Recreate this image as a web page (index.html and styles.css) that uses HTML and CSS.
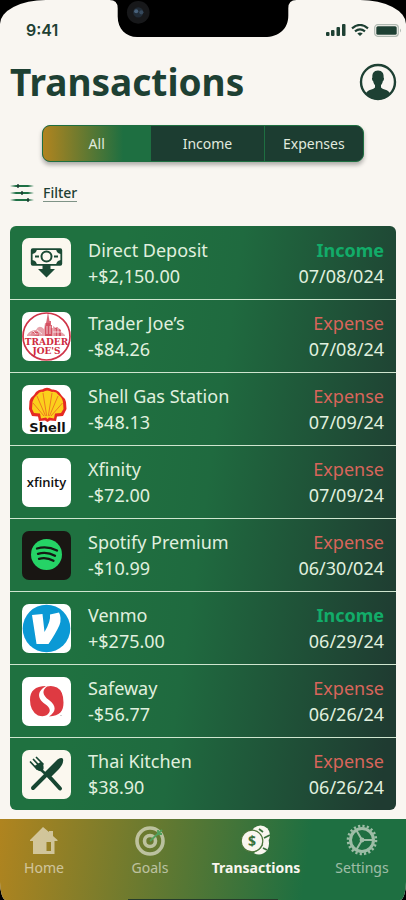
FILE: index.html
```html
<!DOCTYPE html>
<html lang="en">
<head>
    <meta charset="UTF-8">
    <meta name="viewport" content="width=device-width, initial-scale=1.0">
    <title>Transactions</title>
    <link rel="stylesheet" href="styles.css">
</head>
<body>
    <div class="screen">
        <svg class="notch" viewBox="0 0 182 36" aria-hidden="true">
            <path d="M0 0H182Q174 0 174 8V15C174 28 165 36 151 36H27C16 36 8 28 8 16V8Q8 0 0 0Z" fill="#000"/>
            <circle cx="28" cy="12" r="11" fill="#17181a"/>
            <circle cx="28" cy="12" r="5" fill="#202b36"/>
            <circle cx="26" cy="11" r="2" fill="#48617a"/>
            <circle cx="31" cy="12" r="2" fill="#36495c"/>
        </svg>

        <div class="status">
            <span class="time">9:41</span>
            <div class="signals">
                <svg width="20" height="12" viewBox="0 0 20 12" aria-hidden="true">
                    <rect x="0" y="8" width="3.500" height="4" rx="1"/>
                    <rect x="5" y="6" width="3.500" height="6" rx="1"/>
                    <rect x="10.500" y="3" width="3.500" height="9" rx="1"/>
                    <rect x="16" y="0" width="3.500" height="12" rx="1"/>
                </svg>
                <svg width="18" height="12" viewBox="0 0 18 12" aria-hidden="true">
                    <path d="M1 4.3Q9-2.4 17 4.3M4 7.4Q9 3.3 14 7.4" fill="none" stroke="#1e4033" stroke-width="2.2"/>
                    <path d="M6.3 9.4Q9 7.4 11.700 9.4L9 12Z"/>
                </svg>
                <svg width="28" height="13" viewBox="0 0 28 13" aria-hidden="true">
                    <rect x=".7" y=".7" width="23.6" height="11.6" rx="3" fill="none" stroke="#b0b9b1" stroke-width="1.2"/>
                    <rect x="2.3" y="2.3" width="20.4" height="8.4" rx="1.5"/>
                    <path d="M26 4.5Q28 6.5 26 8.5Z" fill="#b0b9b1"/>
                </svg>
            </div>
        </div>

        <header class="header">
            <h1>Transactions</h1>
            <button class="profile" type="button" aria-label="Profile">
                <svg width="38" height="38" viewBox="0 0 38 38" aria-hidden="true">
                    <circle cx="19" cy="19" r="17" fill="none" stroke="#1e4033" stroke-width="2.4"/>
                    <path d="M19 7.5C14.8 7.5 13 10.5 13.4 14.5C12.6 14.8 13 17.6 14.2 18.3C14.6 20.5 15.4 21.600 16 22.2V24.6C15 26.4 8.5 26.5 6.5 31Q12 36.500 19 36.500T31.500 31C29.5 26.5 23 26.4 22 24.6V22.2C22.6 21.6 23.4 20.5 23.8 18.3C25 17.6 25.4 14.8 24.6 14.5C25 10.5 23.2 7.5 19 7.5Z"/>
                </svg>
            </button>
        </header>

        <div class="tabs">
            <button class="tab active" type="button">All</button>
            <button class="tab" type="button">Income</button>
            <button class="tab" type="button">Expenses</button>
        </div>

        <button class="filter" type="button">
            <svg width="24" height="20" viewBox="0 0 24 20" aria-hidden="true">
                <path d="M0 3L6 2H18L24 3L18 4H6ZM0 10L6 9H18L24 10L18 11H6ZM0 17L6 16H18L24 17L18 18H6Z" fill="#1e7045"/>
                <ellipse cx="8" cy="3" rx="1.2" ry="2"/>
                <ellipse cx="12" cy="10" rx="1.2" ry="2"/>
                <ellipse cx="18" cy="17" rx="1.2" ry="2"/>
            </svg>
            <span>Filter</span>
        </button>

        <ul class="list">
            <li>
                <span class="logo cream">
                    <svg viewBox="0 0 49 49" aria-hidden="true">
                        <rect x="9.7" y="11.2" width="29.6" height="15.6" rx="1" fill="none" stroke="#1a4a34" stroke-width="1.8"/>
                        <path d="M10 11H15Q14.500 15.500 10 16ZM39 11H34Q34.500 15.500 39 16ZM10 27V22Q14.500 22.500 15 27ZM39 27V22Q34.500 22.500 34 27Z" fill="#1a4a34"/>
                        <circle cx="24.5" cy="18.5" r="5" fill="none" stroke="#1a4a34" stroke-width="2"/>
                        <path d="M13 18.500H17M32 18.500H36" stroke="#1a4a34" stroke-width="1.8"/>
                        <path d="M20.500 26.800H28.500V31H33L24.500 39.500L16 31H20.500Z" fill="#1a4a34"/>
                    </svg>
                </span>
                <div class="info"><h2>Direct Deposit</h2><p>+$2,150.00</p></div>
                <div class="meta"><p class="income">Income</p><p>07/08/024</p></div>
            </li>
            <li>
                <span class="logo">
                    <svg viewBox="0 0 49 49" aria-hidden="true">
                        <circle cx="24.5" cy="24.5" r="23.5" fill="#fff" stroke="#cf3549" stroke-width="1.7"/>
                        <path d="M5 23Q8 18 14 18Q17 12 22 17L23 11H28V16H31V14Q38 18 43 23V24H5Z" fill="#e6a3ab"/>
                        <path d="M26 0L27.500 9H29V13H30V24H23V15L24.500 9ZM32 17L35 15L39 18V24H32ZM8 23Q11 18 16 20L17 24Z" fill="#cf3549" opacity=".75"/>
                        <path d="M8 22H16M15 18L20 22M31 20H41M33 17V24M36 16V24M11 19L14 22M25 14V22M28 14V22" stroke="#fff" stroke-width=".7"/>
                        <text x="24.5" y="33" class="joes">TRADER</text>
                        <text x="24.5" y="42" class="joes">JOE'S</text>
                    </svg>
                </span>
                <div class="info"><h2>Trader Joe’s</h2><p>-$84.26</p></div>
                <div class="meta"><p class="expense">Expense</p><p>07/08/24</p></div>
            </li>
            <li>
                <span class="logo">
                    <svg viewBox="0 0 49 49" aria-hidden="true">
                        <path d="M17 36L16 31.500L10 31L7 24L7.500 16Q9 12 12 10L14 7Q17 4 20 4.500Q25 1 30 4.500Q34 4 37 7L40 11Q43 13 44 17L44.500 24L41 31L35 31.500L34 36L28 35.500L25.500 37L23 35.500Z" fill="#e52a23"/>
                        <path d="M19 33.500L18 28.500L12 28L10 24L10.500 17Q12 12 15 10Q18 6 21 7Q25 4 30 7Q34 6 36.500 10Q40 12 41 17L41.500 24L39 28L33 28.500L32 33.500L27 32.500L25.500 34L24 32.500Z" fill="#fbd01c"/>
                        <path d="M24.700 31L21 8M26.300 31L30 8M23.500 31L15 11M27.500 31L36 11M22 31L11 18M29 31L40.500 18" stroke="#ef7b20" stroke-width="1"/>
                        <text x="25.5" y="47" class="shell">Shell</text>
                    </svg>
                </span>
                <div class="info"><h2>Shell Gas Station</h2><p>-$48.13</p></div>
                <div class="meta"><p class="expense">Expense</p><p>07/09/24</p></div>
            </li>
            <li>
                <span class="logo">
                    <svg viewBox="0 0 49 49" aria-hidden="true">
                        <text x="24.5" y="29" class="xfinity">xfinity</text>
                    </svg>
                </span>
                <div class="info"><h2>Xfinity</h2><p>-$72.00</p></div>
                <div class="meta"><p class="expense">Expense</p><p>07/09/24</p></div>
            </li>
            <li>
                <span class="logo dark">
                    <svg viewBox="0 0 49 49" aria-hidden="true">
                        <circle cx="24.5" cy="23.5" r="15.5" fill="#25d366"/>
                        <path d="M15 17.500Q25 14.500 35 19.500M16 22.800Q25 20.300 33 24.800M17 27.800Q24.500 25.800 31.500 29.800" fill="none" stroke="#151a14" stroke-linecap="round" stroke-width="2.3"/>
                    </svg>
                </span>
                <div class="info"><h2>Spotify Premium</h2><p>-$10.99</p></div>
                <div class="meta"><p class="expense">Expense</p><p>06/30/024</p></div>
            </li>
            <li>
                <span class="logo">
                    <svg viewBox="0 0 49 49" aria-hidden="true">
                        <circle cx="24.5" cy="24.5" r="23.8" fill="#0b99d5"/>
                        <path d="M10 11L20.500 10L22.500 28Q29 17 28 10.500L37 8.500Q40 14 37.500 21Q34 29 26.500 40H14.500Z" fill="#fff"/>
                    </svg>
                </span>
                <div class="info"><h2>Venmo</h2><p>+$275.00</p></div>
                <div class="meta"><p class="income">Income</p><p>06/29/24</p></div>
            </li>
            <li>
                <span class="logo">
                    <svg viewBox="0 0 49 49" aria-hidden="true">
                        <path d="M24 9C13 9 8 14 8 23Q8 34 16 38.500Q22 40 25 38C29 35 29 31 23 27C16 22 14 15 24 9Z" fill="#de3a42"/>
                        <path d="M25 9.500C20 13 20 18 27 23C35 29 34 35 27 39.500C38 39 41.500 34 41.500 25.500Q41.500 14 35 10.500Q30 8 25 9.500Z" fill="#de3a42"/>
                        <circle cx="39" cy="38.500" r=".5" fill="#888"/>
                    </svg>
                </span>
                <div class="info"><h2>Safeway</h2><p>-$56.77</p></div>
                <div class="meta"><p class="expense">Expense</p><p>06/26/24</p></div>
            </li>
            <li>
                <span class="logo cream">
                    <svg viewBox="0 0 49 49" aria-hidden="true">
                        <path d="M11 38L24 25M28.500 28L38 38.500" stroke="#174632" stroke-width="4" stroke-linecap="round"/>
                        <path d="M22 23L35.500 9.500Q40 7 41 9Q42 14 36 20L27 29Z" fill="#174632"/>
                        <path d="M16 17L29 29" stroke="#174632" stroke-width="2.6"/>
                        <path d="M8.500 12L15 19M11.500 9.500L18 16.500M14.500 7.500L21 14" stroke="#174632" stroke-width="1.7" stroke-linecap="round"/>
                        <path d="M12.500 16L18.500 12L21 14Q22.500 19 20.500 20.500Q18 22.500 14.500 19.500Z" fill="#174632"/>
                    </svg>
                </span>
                <div class="info"><h2>Thai Kitchen</h2><p>$38.90</p></div>
                <div class="meta"><p class="expense">Expense</p><p>06/26/24</p></div>
            </li>
        </ul>

        <nav class="nav">
            <a href="#">
                <svg viewBox="0 0 32 32" aria-hidden="true">
                    <path fill-rule="evenodd" d="M15 3L21 8V7H25V12L29.500 16V17H26.500V30H5V17H2V16ZM18.500 18V27H23V18Z"/>
                </svg>
                <span>Home</span>
            </a>
            <a href="#">
                <svg viewBox="0 0 32 32" aria-hidden="true">
                    <circle cx="16" cy="17" r="13" fill="none" stroke="#f9f6ef" stroke-width="3.6"/>
                    <circle cx="16" cy="17" r="5.5" fill="none" stroke="#f9f6ef" stroke-width="3.6"/>
                    <path d="M16 17L28 6M24 9V6M24 10H28" stroke="#43bd7c" stroke-width="1.8" fill="none"/>
                </svg>
                <span>Goals</span>
            </a>
            <a class="current" href="#">
                <svg viewBox="0 0 32 32" aria-hidden="true">
                    <circle cx="20.5" cy="11" r="9.500"/>
                    <path d="M28 14Q30.500 21 27 26.500Q21 33 13.500 29Q22 26 24 18Q25 16 23 14Z"/>
                    <path d="M19 5L23 8M24 14L30 11M23 24L27 26" fill="none" stroke="#38703a" stroke-width="1.8"/>
                    <circle cx="12" cy="17" r="10.8" stroke="#4b7438" stroke-width="1.2"/>
                    <text x="12" y="22" class="coin">$</text>
                </svg>
                <span>Transactions</span>
            </a>
            <a href="#">
                <svg viewBox="0 0 32 32" aria-hidden="true">
                    <circle cx="16" cy="16" r="14" fill="none" stroke="#f9f6ef" stroke-width="2.6" stroke-dasharray="2.2 2.198"/>
                    <circle cx="16" cy="16" r="11.5" fill="none" stroke="#f9f6ef" stroke-width="3"/>
                    <path d="M16 16H27M16 16L10.500 6.500M16 16L10.500 25.500" stroke="#f9f6ef" stroke-width="2"/>
                    <circle cx="16" cy="16" r="2.4"/>
                </svg>
                <span>Settings</span>
            </a>
        </nav>
        <div class="indicator"></div>
    </div>
</body>
</html>
```
FILE: styles.css
```css
*{
    box-sizing: border-box;
}
body,h1,h2,p,ul{
    margin: 0;
}
body{
    background-color: #000;
    color: #1e4033;
    font-family: "Noto Sans", "Open Sans", sans-serif;
}
ul{
    padding: 0;
    list-style: none;
}
svg{
    display: block;
    fill: #1e4033;
}
button{
    padding: 0;
    border: 0;
    background: none;
    color: inherit;
    font-family: inherit;
}
.screen{
    position: relative;
    display: flex;
    flex-direction: column;
    min-height: 100vh;
    overflow: hidden;
    border-radius: 46px 46px 6px 6px / 24px 24px 18px 18px;
    background-color: #f9f6f1;
}
.notch{
    position: absolute;
    top: 0;
    left: 50%;
    width: 190px;
    height: 37px;
    transform: translateX(-50%);
}

/* status bar */
.status{
    display: flex;
    justify-content: space-between;
    align-items: center;
    height: 60px;
    padding: 0 4px 0 26px;
}
.time{
    font: 600 16px/20px Inter, sans-serif;
}
.signals{
    display: flex;
    align-items: center;
    gap: 5px;
}

.header{
    display: flex;
    justify-content: space-between;
    align-items: center;
    height: 44px;
    padding: 0 9px 0 10px;
}
.header h1{
    font-size: 37px;
    line-height: 44px;
}

.tabs{
    display: grid;
    grid-template-columns: 108fr 114fr 100fr;
    height: 37px;
    margin: 21px 42px 0;
    overflow: hidden;
    border: 1px solid #1e6f41;
    border-radius: 8px;
    background-color: #1c3d31;
    box-shadow: 0 3px 4px rgba(0, 0, 0, .3);
}
.tab{
    color: #e0eadf;
    font-size: 14px;
}
.tab.active{
    background: linear-gradient(90deg, #b0841f, #1e6f41 75%);
}
.tab + .tab{
    border-left: 1px solid #1e6f41;
}

.filter{
    display: flex;
    align-self: flex-start;
    align-items: center;
    gap: 9px;
    margin: 21px 0 0 10px;
    font-size: 14px;
    font-weight: 500;
    line-height: 20px;
}
.filter span{
    border-bottom: 1px solid #7f9387;
    line-height: 17px;
}

/* transactions */
.list{
    margin: 23px 10px 8px;
    overflow: hidden;
    border-radius: 6px;
    background: linear-gradient(98deg, #1f7140 25%, #1f6a3f 50%, #1f3b31 96%);
}
.list li{
    display: flex;
    align-items: center;
    height: 73px;
    padding: 0 12px;
    color: #e0f0df;
    font-size: 18px;
    line-height: 26px;
}
.list li + li{
    border-top: 1px solid #cfe5cf;
}
.list h2{
    font-size: 18px;
    font-weight: 400;
}
.logo{
    flex: none;
    width: 49px;
    height: 49px;
    margin-right: 17px;
    overflow: hidden;
    border-radius: 7px;
    background-color: #fff;
}
.logo.cream{
    background-color: #fbf8ef;
}
.logo.dark{
    background-color: #191613;
}
.info{
    flex: 1;
}
.meta{
    text-align: right;
}
.list .income{
    color: #12ac69;
    font-weight: 700;
}
.list .expense{
    color: #d8655b;
}
.joes{
    fill: #cf2a40;
    font: 700 9px "DejaVu Serif", serif;
    text-anchor: middle;
}
.shell{
    fill: #111;
    font: 700 13px "DejaVu Sans", sans-serif;
    text-anchor: middle;
}
.xfinity{
    fill: #111;
    font: 600 13px "Open Sans", sans-serif;
    text-anchor: middle;
}

/* bottom menu */
.nav{
    display: grid;
    grid-template-columns: repeat(4, 1fr);
    height: 81px;
    margin: auto -9px 0;
    padding-top: 5px;
    background: linear-gradient(98deg, #b0841f 2%, #1e6f41 74%);
}
.nav a{
    display: flex;
    flex-direction: column;
    align-items: center;
    color: #f9f6ef;
    font-size: 14px;
    line-height: 20px;
    text-decoration: none;
}
.nav a:not(.current){
    opacity: .58;
}
.nav a.current{
    font-weight: 700;
}
.nav svg{
    width: 32px;
    height: 32px;
    margin-bottom: 2px;
    fill: #f9f6ef;
}
.nav .coin{
    fill: #38703a;
    font: 700 14px "Noto Sans", sans-serif;
    text-anchor: middle;
}

/* top edge of the home indicator */
.indicator{
    position: absolute;
    bottom: 0;
    left: 50%;
    width: 150px;
    height: 1px;
    background-color: #263c2b;
    transform: translateX(-50%);
}
```
